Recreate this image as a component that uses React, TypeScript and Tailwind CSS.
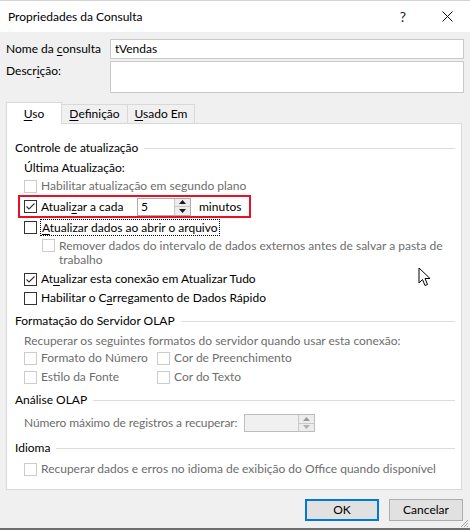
import React from 'react';

function Check({ checked = false, disabled = false }: { checked?: boolean; disabled?: boolean }) {
  return (
    <span
      className={`w-[13px] h-[13px] shrink-0 bg-white border flex items-center justify-center ${
        disabled ? 'border-[#cccccc]' : 'border-[#333333]'
      }`}
    >
      {checked && (
        <svg width="11" height="11" viewBox="0 0 11 11">
          <path d="M1.5 5.5 L4 8 L9.5 2.5" fill="none" stroke="#333333" strokeWidth="1.1" />
        </svg>
      )}
    </span>
  );
}

function U({ children }: { children: React.ReactNode }) {
  return <span className="underline underline-offset-2">{children}</span>;
}

function Group({ title }: { title: string }) {
  return (
    <div className="h-[20px] flex items-center pl-[8px] pr-[6px]">
      <span className="text-black whitespace-nowrap">{title}</span>
      <div className="flex-1 h-px bg-[#dcdcdc] ml-[6px]"></div>
    </div>
  );
}

function SpinArrows({ disabled = false }: { disabled?: boolean }) {
  const c = disabled ? '#9a9a9a' : '#1a1a1a';
  return (
    <div className="w-[16px] h-full flex flex-col border-l border-[#c8c8c8]">
      <div className="flex-1 bg-[#ececec] flex items-center justify-center border-b border-[#c8c8c8]">
        <svg width="7" height="4" viewBox="0 0 7 4"><path d="M0 4 L3.5 0 L7 4 Z" fill={c} /></svg>
      </div>
      <div className="flex-1 bg-[#ececec] flex items-center justify-center">
        <svg width="7" height="4" viewBox="0 0 7 4"><path d="M0 0 L3.5 4 L7 0 Z" fill={disabled ? '#b0b0b0' : c} /></svg>
      </div>
    </div>
  );
}

export default function App() {
  const gray = 'text-[#6d6d6d]';
  return (
    <div
      className="w-[470px] h-[530px] bg-[#f0f0f0] relative overflow-hidden flex flex-col text-[12px] text-black whitespace-nowrap"
      style={{ fontFamily: 'Lato, "Noto Sans", sans-serif' }}
    >
      {/* Title bar */}
      <div className="h-[32px] bg-white border-t border-[#d4d4d4] flex items-center shrink-0">
        <span className="pl-[8px] text-[12px]">Propriedades da Consulta</span>
        <div className="ml-auto flex h-full">
          <div className="w-[44px] flex items-center justify-center text-[14px] text-[#222]">?</div>
          <div className="w-[45px] flex items-center justify-center">
            <svg width="11" height="11" viewBox="0 0 11 11">
              <path d="M0.5 0.5 L10.5 10.5 M10.5 0.5 L0.5 10.5" stroke="#111" strokeWidth="1" />
            </svg>
          </div>
        </div>
      </div>

      {/* Name / description */}
      <div className="flex items-center mt-[7px] pl-[6px]">
        <span className="w-[104px]">
          Nome da <U>c</U>onsulta
        </span>
        <div className="w-[354px] h-[20px] bg-white border border-[#c9c9c9] flex items-center pl-[4px]">tVendas</div>
      </div>
      <div className="flex items-start mt-[2px] pl-[6px]">
        <span className="w-[104px] mt-[1px]">
          Descr<U>i</U>ção:
        </span>
        <div className="w-[354px] h-[32px] bg-white border border-[#c9c9c9]"></div>
      </div>

      {/* Tabs */}
      <div className="flex items-end mt-[8px] pl-[6px] h-[22px] relative z-10">
        <div className="w-[56px] h-[22px] bg-white border border-b-0 border-[#d9d9d9] flex items-center justify-center -mb-px">
          <span><U>U</U>so</span>
        </div>
        <div className="w-[66px] h-[19px] border border-l-0 border-b-0 border-[#d9d9d9] flex items-center justify-center">
          <span><U>D</U>efinição</span>
        </div>
        <div className="w-[67px] h-[19px] border border-l-0 border-b-0 border-[#d9d9d9] flex items-center justify-center">
          <span><U>U</U>sado Em</span>
        </div>
      </div>

      {/* Panel */}
      <div className="ml-[6px] w-[456px] h-[367px] bg-white border border-[#d9d9d9] pt-[14px] flex flex-col">
        <Group title="Controle de atualização" />
        <div className="h-[20px] flex items-center pl-[17px]">Última Atualização:</div>
        <div className={`h-[16px] flex items-center pl-[17px] gap-[4px] ${gray}`}>
          <Check disabled />
          <span>Habilitar atualização em segundo plano</span>
        </div>
        <div className="mt-[1px] ml-[11px] w-[233px] h-[23px] border-2 border-[#e81123] flex items-center pl-[4px]">
          <Check checked />
          <span className="ml-[4px] w-[96px]">
            Atuali<U>z</U>ar a cada
          </span>
          <div className="w-[54px] h-[18px] border border-[#adadad] bg-white flex">
            <span className="flex-1 pl-[3px] leading-[16px]">5</span>
            <SpinArrows />
          </div>
          <span className="ml-[8px]">minutos</span>
        </div>
        <div className="h-[18px] flex items-center pl-[17px] gap-[3px]">
          <Check />
          <span className="border border-dotted border-black px-[1px] leading-[15px]">
            <U>A</U>tualizar dados ao abrir o arquivo
          </span>
        </div>
        <div className={`mt-[3px] h-[28px] flex items-start pl-[35px] gap-[4px] leading-[14px] ${gray}`}>
          <Check disabled />
          <span className="w-[392px] whitespace-normal">
            Remover dados do intervalo de dados externos antes de salvar a pasta de trabalho
          </span>
        </div>
        <div className="mt-[3px] h-[18px] flex items-center pl-[17px] gap-[4px]">
          <Check checked />
          <span>
            At<U>u</U>alizar esta conexão em Atualizar Tudo
          </span>
        </div>
        <div className="mt-[1px] h-[18px] flex items-center pl-[17px] gap-[4px]">
          <Check />
          <span>
            Habilitar o C<U>a</U>rregamento de Dados Rápido
          </span>
        </div>

        <div className="mt-[4px]">
          <Group title="Formatação do Servidor OLAP" />
        </div>
        <div className={`mt-[1px] h-[17px] flex items-center pl-[17px] ${gray}`}>
          Recuperar os seguintes formatos do servidor quando usar esta conexão:
        </div>
        <div className={`h-[18px] flex items-center pl-[17px] ${gray}`}>
          <div className="w-[133px] flex items-center gap-[4px]">
            <Check disabled />
            <span>Formato do Número</span>
          </div>
          <div className="flex items-center gap-[4px]">
            <Check disabled />
            <span>Cor de Preenchimento</span>
          </div>
        </div>
        <div className={`mt-[1px] h-[18px] flex items-center pl-[17px] ${gray}`}>
          <div className="w-[133px] flex items-center gap-[4px]">
            <Check disabled />
            <span>Estilo da Fonte</span>
          </div>
          <div className="flex items-center gap-[4px]">
            <Check disabled />
            <span>Cor do Texto</span>
          </div>
        </div>

        <div className="mt-[4px]">
          <Group title="Análise OLAP" />
        </div>
        <div className={`mt-[4px] h-[18px] flex items-center pl-[17px] ${gray}`}>
          <span className="w-[220px] tracking-[-0.1px]">Número máximo de registros a recuperar:</span>
          <div className="w-[71px] h-[18px] border border-[#bdbdbd] bg-[#f0f0f0] flex">
            <span className="flex-1"></span>
            <SpinArrows disabled />
          </div>
        </div>

        <div className="mt-[6px]">
          <Group title="Idioma" />
        </div>
        <div className={`mt-[2px] h-[18px] flex items-center pl-[17px] gap-[4px] ${gray}`}>
          <Check disabled />
          <span>Recuperar dados e erros no idioma de exibição do Office quando disponível</span>
        </div>
      </div>

      {/* Buttons */}
      <div className="mt-[9px] flex pl-[305px] gap-[10px]">
        <button className="w-[74px] h-[22px] bg-[#e1e1e1] border-2 border-[#0078d7] flex items-center justify-center">
          OK
        </button>
        <button className="w-[74px] h-[22px] bg-[#e1e1e1] border border-[#adadad] flex items-center justify-center">
          Cancelar
        </button>
      </div>

      <div className="mt-auto h-[2px] bg-[#6e6e6e]"></div>

      {/* Resize grip */}
      <svg className="absolute right-[1px] bottom-[2px]" width="10" height="10" viewBox="0 0 10 10">
        <path d="M9 2 L2 9 M9 5 L5 9 M9 8 L8 9" stroke="#a0a0a0" strokeWidth="1" />
      </svg>

      {/* Mouse cursor */}
      <svg className="absolute left-[418px] top-[267px]" width="13" height="21" viewBox="0 0 13 21">
        <path
          d="M1 1 L1 16 L4.5 12.5 L7 18.5 L9.5 17.5 L7 11.5 L12 11.5 Z"
          fill="#ffffff"
          stroke="#000000"
          strokeWidth="1"
          strokeLinejoin="miter"
        />
      </svg>
    </div>
  );
}
